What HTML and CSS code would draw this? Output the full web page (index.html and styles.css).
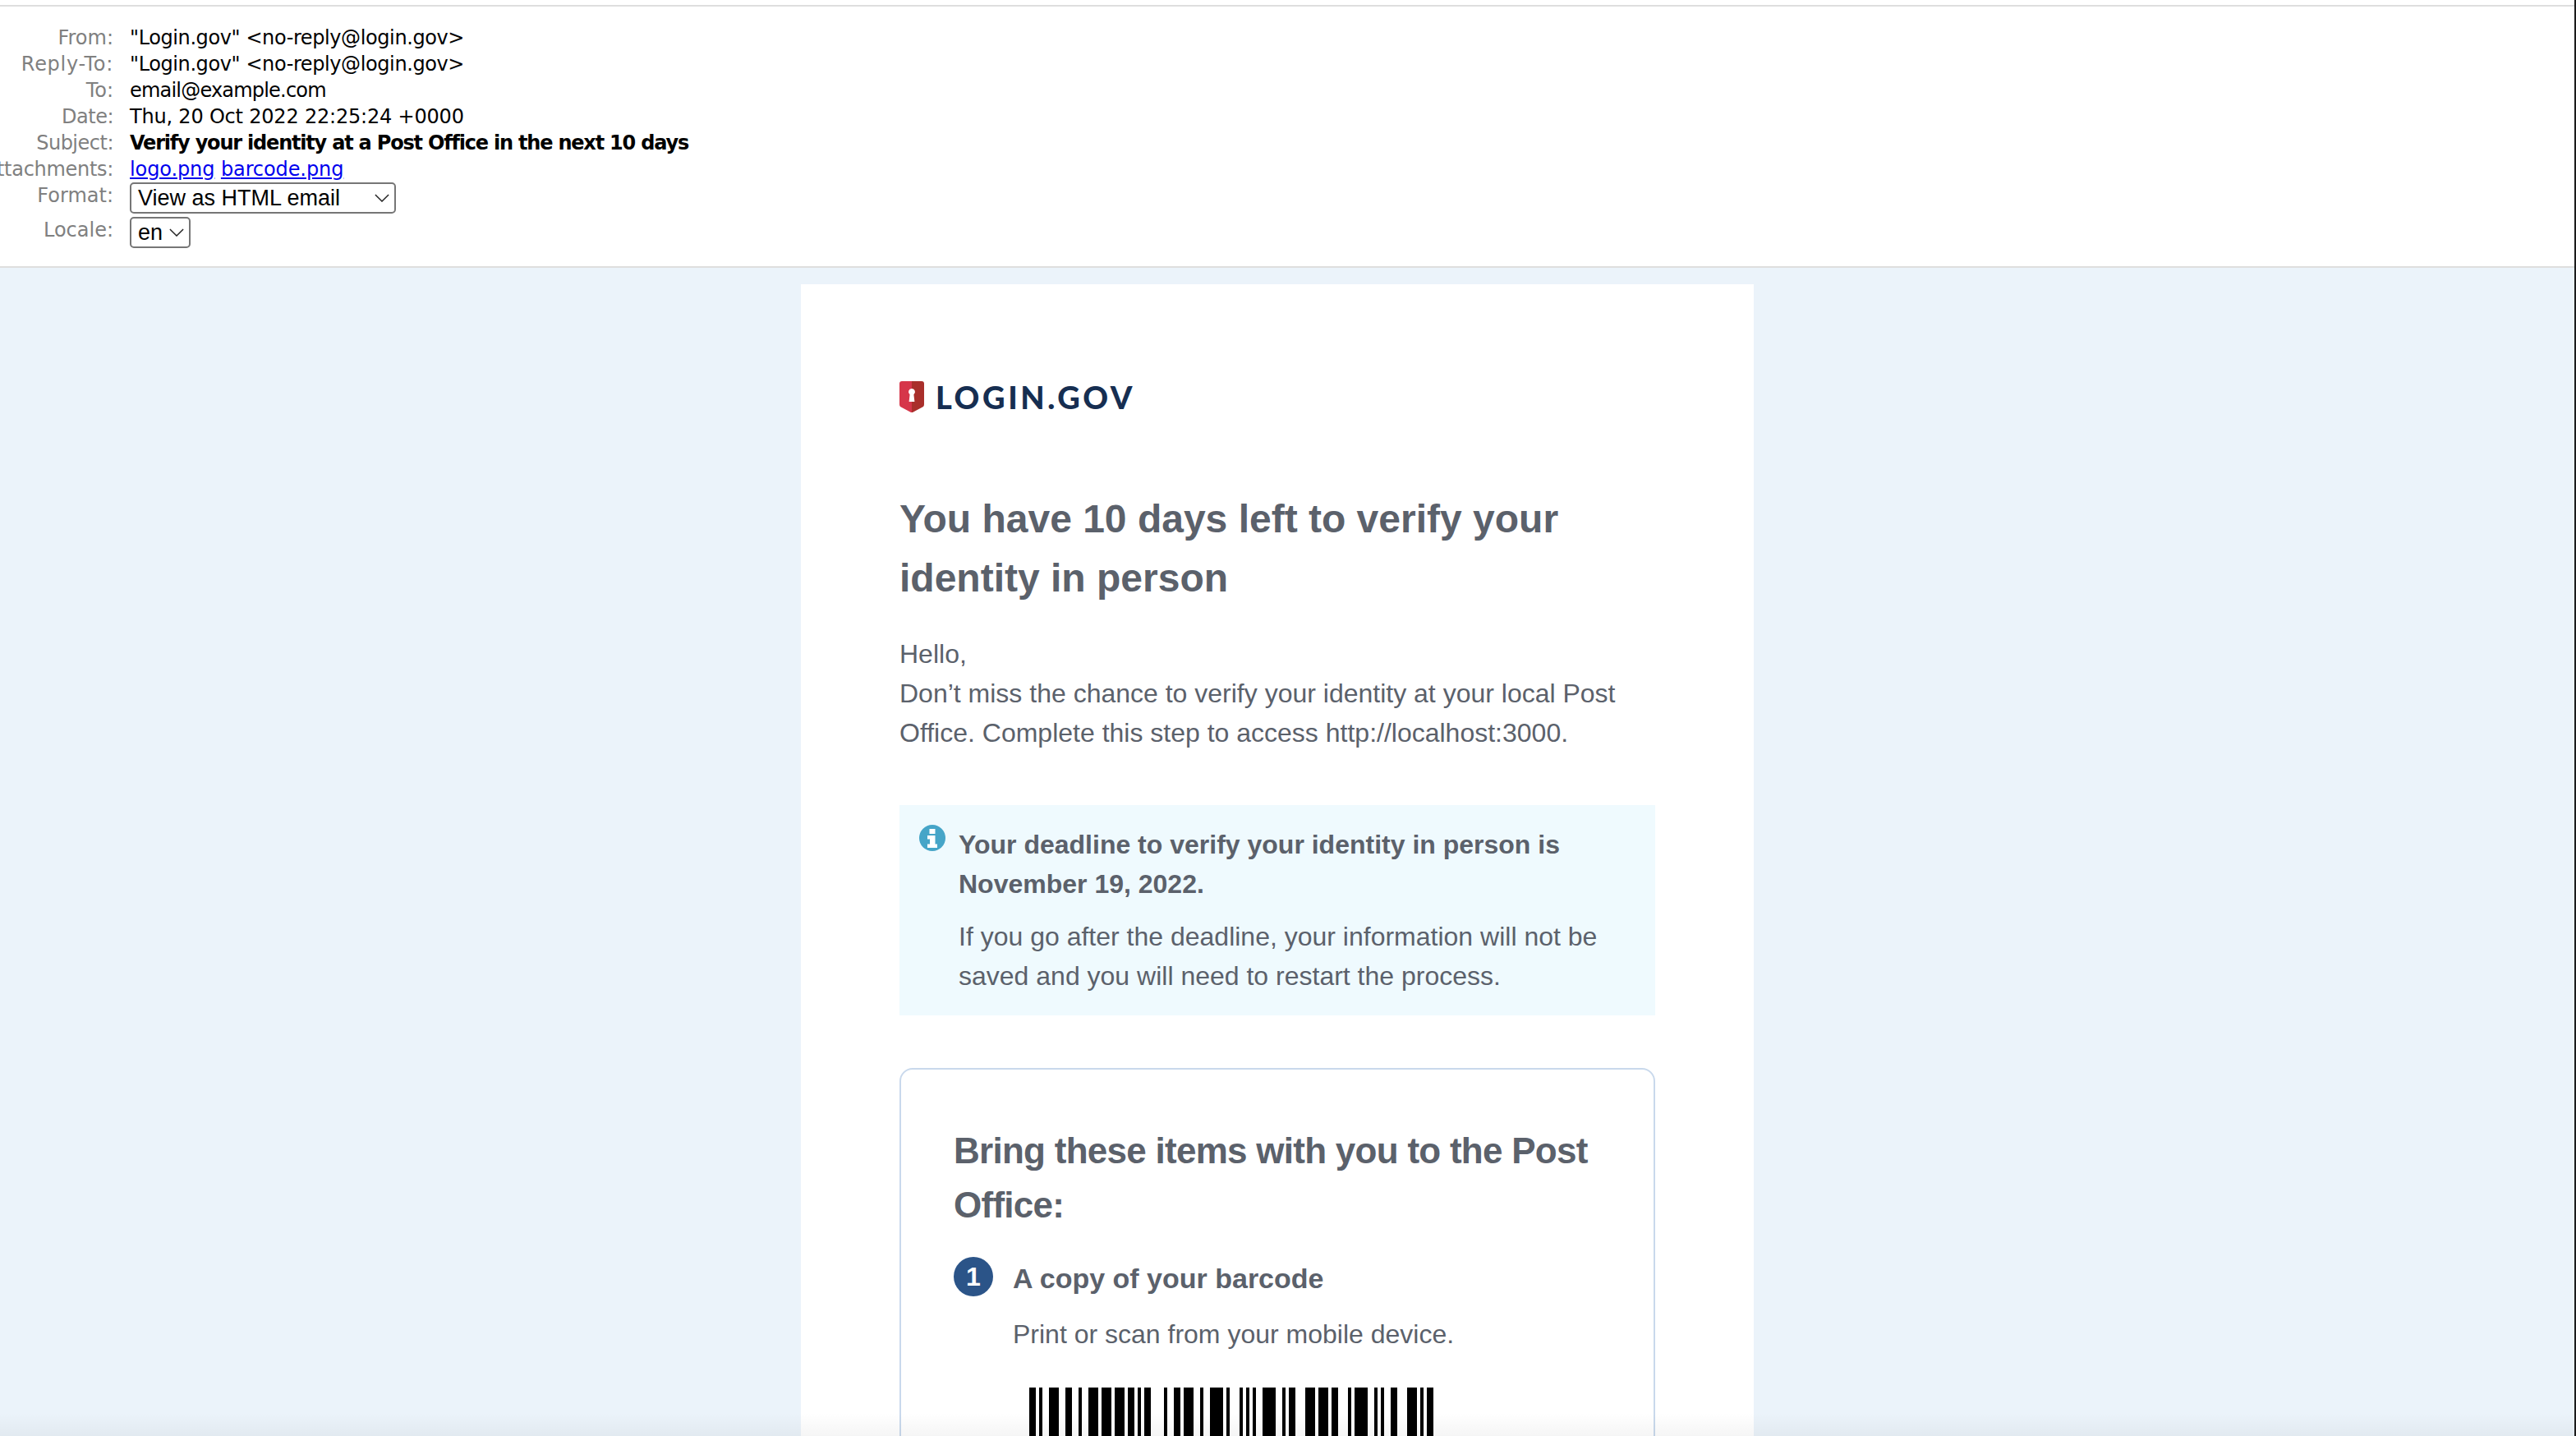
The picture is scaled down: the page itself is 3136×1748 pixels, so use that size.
FILE: index.html
```html
<!DOCTYPE html>
<html lang="en">
<head>
<meta charset="utf-8">
<title>Verify your identity at a Post Office in the next 10 days</title>
<link rel="stylesheet" href="styles.css">
</head>
<body>
<div class="topline"></div>
<header class="meta">
  <div class="row"><span class="label">From:</span><span class="value">"Login.gov" &lt;no-reply@login.gov&gt;</span></div>
  <div class="row"><span class="label wide">Reply-To:</span><span class="value">"Login.gov" &lt;no-reply@login.gov&gt;</span></div>
  <div class="row"><span class="label">To:</span><span class="value mail">email@example.com</span></div>
  <div class="row"><span class="label tight">Date:</span><span class="value date">Thu, 20 Oct 2022 22:25:24 +0000</span></div>
  <div class="row"><span class="label tight">Subject:</span><span class="value strong">Verify your identity at a Post Office in the next 10 days</span></div>
  <div class="row"><span class="label attach">Attachments:</span><span class="value files"><a href="#">logo.png</a> <a href="#">barcode.png</a></span></div>
  <div class="row row-format"><span class="label">Format:</span><span class="fake-select format">View as HTML email<svg class="chev" viewBox="0 0 20 11"><path d="M1 1l9 9 9-9" fill="none" stroke="#222" stroke-width="1.6"/></svg></span></div>
  <div class="row row-locale"><span class="label">Locale:</span><span class="fake-select locale">en<svg class="chev" viewBox="0 0 20 11"><path d="M1 1l9 9 9-9" fill="none" stroke="#222" stroke-width="1.6"/></svg></span></div>
</header>
<main class="stage">
  <article class="card">
    <div class="logo">
      <svg class="shield" viewBox="0 0 30 38">
        <path d="M3 0h12v38l-1 0L1 31q-1-1-1-3V3q0-3 3-3z" fill="#d6364a"/>
        <path d="M15 0h12q3 0 3 3v25q0 2-1 3L16 38l-1 0z" fill="#a92f2b"/>
        <path d="M15 9a4 4 0 0 1 2.4 7.2l1 8.8h-6.8l1-8.800A4 4 0 0 1 15 9z" fill="#fff"/>
      </svg>
      <span class="wordmark">LOGIN.GOV</span>
    </div>
    <h1>You have 10 days left to verify your identity in person</h1>
    <p class="intro">Hello,<br>Don’t miss the chance to verify your identity at your local Post Office. Complete this step to access http://localhost:3000.</p>
    <section class="alert">
      <svg class="info" viewBox="0 0 32 32">
        <circle cx="16" cy="16" r="16" fill="#46a5c8"/>
        <rect x="12.500" y="5" width="7" height="6" fill="#fff"/>
        <path d="M10 13h9.500v10.500H22V28H10v-4.500h3V17.500h-3z" fill="#fff"/>
      </svg>
      <div class="alert-body">
        <p class="alert-title">Your deadline to verify your identity in person is November 19, 2022.</p>
        <p class="alert-text">If you go after the deadline, your information will not be saved and you will need to restart the process.</p>
      </div>
    </section>
    <section class="items">
      <h2>Bring these items with you to the Post Office:</h2>
      <div class="step">
        <span class="num">1</span>
        <div class="step-body">
          <h3>A copy of your barcode</h3>
          <p>Print or scan from your mobile device.</p>
          <svg class="barcode" viewBox="0 0 123 50" preserveAspectRatio="none">
            <path d="M0 0h2v50H0zM3 0h1v50H3zM6 0h3v50H6zM11 0h2v50h-2zM15 0h1v50h-1zM18 0h3v50h-3zM22 0h3v50h-3zM26 0h3v50h-3zM30 0h2v50h-2zM33 0h1v50h-1zM35 0h2v50h-2zM41 0h1v50h-1zM44 0h2v50h-2zM47 0h3v50h-3zM52 0h1v50h-1zM55 0h4v50h-4zM60 0h1v50h-1zM64 0h1v50h-1zM66 0h1v50h-1zM68 0h1v50h-1zM71 0h4v50h-4zM77 0h1v50h-1zM79 0h2v50h-2zM84 0h3v50h-3zM88 0h3v50h-3zM92 0h2v50h-2zM97 0h1v50h-1zM99 0h4v50h-4zM105 0h1v50h-1zM107 0h1v50h-1zM110 0h2v50h-2zM115 0h3v50h-3zM119 0h1v50h-1zM121 0h2v50h-2z" fill="#000"/>
          </svg>
        </div>
      </div>
    </section>
  </article>
</main>
<div class="bottom-fade"></div>
<div class="edge"></div>
</body>
</html>
```
FILE: styles.css
```css
* { box-sizing: border-box; }
html, body { margin: 0; padding: 0; height: 1748px; overflow: hidden; }
body { background: #fff; font-family: "Liberation Sans", Arial, sans-serif; color: #5b616b; position: relative; }
.topline { height: 8px; border-bottom: 2px solid #dedede; background: #fff; }
.meta { height: 318px; padding-top: 22px; border-bottom: 2px solid #dedede; font-family: "DejaVu Sans", sans-serif; font-size: 24px; color: #000; }
.row { display: flex; gap: 20px; height: 32px; line-height: 32px; white-space: nowrap; }
.label { width: 138px; flex: none; display: flex; justify-content: flex-end; color: #808080; }
.label.wide { letter-spacing: 0.7px; }
.label.tight { letter-spacing: -0.5px; }
.label.attach { letter-spacing: -0.3px; }
.value { letter-spacing: -0.4px; }
.value.mail { letter-spacing: -0.8px; }
.value.date { letter-spacing: -0.2px; }
.value.files { letter-spacing: -0.1px; }
.value.strong { font-weight: 700; letter-spacing: -1.2px; }
.value a { color: #0000ee; text-decoration: underline; }
.row-format { height: 42px; }
.row-locale { height: 42px; }
.fake-select { display: flex; align-items: center; justify-content: space-between; height: 38px; border: 2px solid #767676; border-radius: 5px; background: #fff; padding: 0 5px 0 8px; font-family: "Liberation Sans", sans-serif; font-size: 27px; color: #000; letter-spacing: 0; }
.format { width: 324px; }
.locale { width: 74px; }
.chev { width: 18px; height: 10px; margin-right: 1px; flex: none; }
.stage { background: #ebf3fa; height: 1422px; overflow: hidden; display: flex; justify-content: center; padding: 20px 26px 0 0; }
.card { width: 1160px; background: #fff; padding: 117px 120px 0; height: 1500px; flex: none; }
.logo { display: flex; align-items: center; gap: 14px; height: 40px; }
.shield { width: 30px; height: 38px; flex: none; }
.wordmark { font-family: "Lato", sans-serif; font-weight: 900; font-size: 38px; letter-spacing: 3.6px; color: #162e51; }
h1 { margin: 93px 0 0; font-size: 48px; line-height: 72px; font-weight: 700; color: #5b616b; }
.intro { margin: 32px 0 0; font-size: 32px; line-height: 48px; }
.alert { display: flex; gap: 16px; margin-top: 64px; padding: 24px; background: #effafe; height: 256px; }
.info { width: 32px; height: 32px; flex: none; }
.alert p { margin: 0; font-size: 32px; line-height: 48px; }
.alert-title { font-weight: 700; }
.alert .alert-text { margin-top: 16px; }
.items { margin-top: 64px; border: 2px solid #c9d9ec; border-radius: 16px; padding: 66px 64px 0; height: 800px; }
h2 { margin: 0; font-size: 44px; line-height: 66px; font-weight: 700; letter-spacing: -0.73px; }
.step { display: flex; gap: 24px; margin-top: 30px; }
.num { width: 48px; height: 48px; flex: none; border-radius: 50%; background: #2b5488; color: #fff; font-weight: 700; font-size: 32px; display: flex; align-items: center; justify-content: center; }
h3 { margin: 2px 0 0; font-size: 34px; line-height: 48px; font-weight: 700; }
.step-body p { margin: 20px 0 0; font-size: 32px; line-height: 48px; }
.barcode { display: block; width: 492px; height: 200px; margin: 41px 0 0 20px; }
.bottom-fade { position: absolute; left: 0; right: 0; bottom: 0; height: 28px; background: linear-gradient(rgba(0,0,0,0), rgba(0,0,0,0.04)); }
.edge { position: absolute; top: 0; right: 0; bottom: 0; width: 2px; background: #1c1c1c; }
```
